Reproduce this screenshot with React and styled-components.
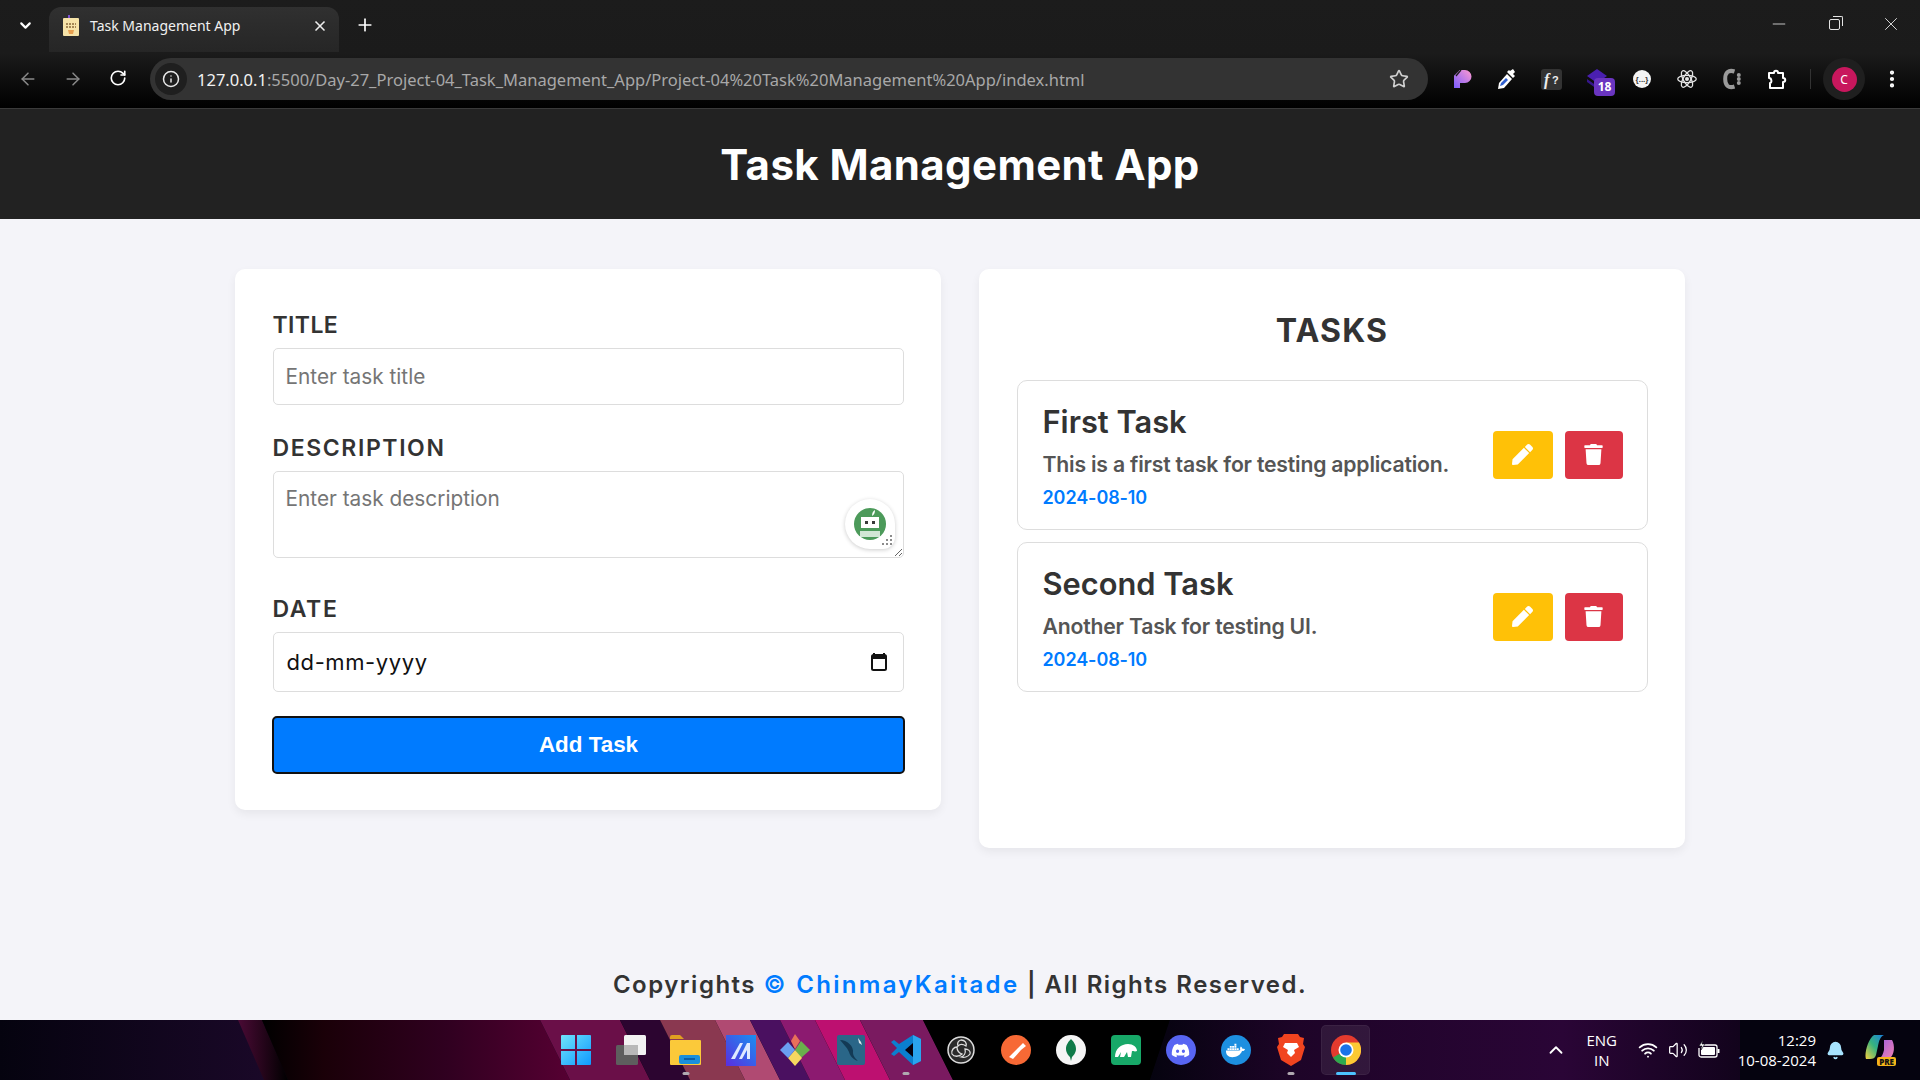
import React from 'react';
import styled, { createGlobalStyle } from 'styled-components';
import { ArrowLeft, ArrowRight, RotateCw, Info, Star, X, Plus, ChevronDown, ChevronUp, Minus, EllipsisVertical, Wifi, Volume2, Bell } from 'lucide-react';
import { FaPen, FaTrash, FaDiscord, FaDocker } from 'react-icons/fa';

const GlobalStyle = createGlobalStyle`
  * { box-sizing: border-box; }
  html, body { margin: 0; padding: 0; }
  body {
    background: #f4f4f9;
    font-family: Inter, "Noto Sans", sans-serif;
    overflow: hidden;
  }
`;

const Page = styled.div`
  display: flex;
  flex-direction: column;
  width: 1920px;
  height: 1080px;
  overflow: hidden;
`;

/* browser chrome */
const Browser = styled.div`
  height: 109px;
  flex: none;
  display: flex;
  flex-direction: column;
  background: linear-gradient(#1c1c1c 0, #1b1b1b 50%, #000 100%);
  border-bottom: 1px solid #3a3a3a;
  font-family: "Noto Sans", "Open Sans", sans-serif;
`;

const TabStrip = styled.div`
  height: 52px;
  display: flex;
  align-items: flex-end;
  padding-left: 11px;
  color: #e6e6e6;
`;

const StripButton = styled.div`
  width: 28px;
  height: 38px;
  margin-bottom: 8px;
  display: flex;
  align-items: center;
  justify-content: center;
  color: #fff;
`;

const Tab = styled.div`
  width: 290px;
  height: 45px;
  margin: 0 12px 0 10px;
  padding: 0 11px 8px 12px;
  display: flex;
  align-items: center;
  gap: 9px;
  border-radius: 12px 12px 0 0;
  background: linear-gradient(#303030, #262626);
`;

const TabTitle = styled.span`
  flex: 1;
  font-size: 14px;
  color: #f0f0f0;
`;

const WindowControls = styled.div`
  margin-left: auto;
  height: 48px;
  align-self: flex-start;
  display: flex;
  align-items: center;
  gap: 40px;
  padding-right: 18px;
  color: #e4e4e4;
`;

const RestoreIcon = styled.div`
  position: relative;
  width: 11px;
  height: 11px;
  border: 1px solid #e4e4e4;
  border-radius: 2px;
  &::after {
    content: '';
    position: absolute;
    top: -4px;
    right: -4px;
    width: 9px;
    height: 9px;
    border-top: 1px solid #e4e4e4;
    border-right: 1px solid #e4e4e4;
    border-radius: 0 2px 0 0;
  }
`;

const Toolbar = styled.div`
  height: 56px;
  display: flex;
  align-items: center;
  padding-bottom: 2px;
`;

const NavButton = styled.div`
  width: 45px;
  display: flex;
  justify-content: center;
  color: ${p => (p.$dim ? '#8a8a8a' : '#fff')};
`;

const NavGroup = styled.div`
  display: flex;
  padding-left: 5px;
  width: 150px;
`;

const AddressBar = styled.div`
  width: 1278px;
  height: 42px;
  border-radius: 21px;
  background: #333;
  display: flex;
  align-items: center;
  padding: 0 19px 0 5px;
`;

const InfoBadge = styled.div`
  width: 32px;
  height: 32px;
  border-radius: 50%;
  background: #1f1f1f;
  display: flex;
  align-items: center;
  justify-content: center;
  color: #e8e8e8;
  margin-right: 10px;
`;

const UrlText = styled.div`
  flex: 1;
  font-size: 16.5px;
  color: #a8a8a8;
  white-space: nowrap;
  & b { font-weight: 400; color: #f2f2f2; }
`;

const Extensions = styled.div`
  display: flex;
  align-items: center;
  padding-left: 11px;
`;

const ExtSlot = styled.div`
  position: relative;
  width: 45px;
  height: 32px;
  display: flex;
  align-items: center;
  justify-content: center;
  color: #fff;
`;

const CountBadge = styled.span`
  position: absolute;
  right: 4px;
  bottom: -1px;
  width: 21px;
  height: 18px;
  border-radius: 4px;
  background: #6a35c0;
  color: #fff;
  font-size: 12px;
  font-weight: 700;
  line-height: 18px;
  text-align: center;
`;

const Separator = styled.div`
  width: 1px;
  height: 20px;
  background: #333;
  margin: 0 12px 0 11px;
`;

const AvatarRing = styled.div`
  width: 42px;
  height: 42px;
  border-radius: 50%;
  background: #1f1f1f;
  display: flex;
  align-items: center;
  justify-content: center;
  margin-right: 16px;
`;

const Avatar = styled.div`
  width: 25px;
  height: 25px;
  border-radius: 50%;
  background: #c8175d;
  color: #fff;
  font-size: 12px;
  display: flex;
  align-items: center;
  justify-content: center;
`;

/* app */
const AppHeader = styled.header`
  height: 110px;
  flex: none;
  background: #222;
  display: flex;
  align-items: center;
  justify-content: center;
`;

const AppTitle = styled.h1`
  margin: 0;
  color: #fff;
  font-size: 42px;
  font-weight: 700;
  letter-spacing: 0.4px;
`;

const Main = styled.main`
  flex: 1;
  display: flex;
  justify-content: center;
  align-items: flex-start;
  gap: 38px;
  padding-top: 50px;
`;

const Card = styled.section`
  width: 706px;
  min-height: ${p => p.$minHeight || 0}px;
  padding: ${p => p.$top}px 37.5px 36px;
  background: #fff;
  border-radius: 10px;
  box-shadow: 0 4px 10px rgba(0, 0, 0, 0.06);
`;

const Label = styled.label`
  display: block;
  height: 29px;
  line-height: 29px;
  margin-bottom: 8px;
  color: #333;
  font-size: 23px;
  font-weight: 600;
  letter-spacing: ${p => (p.$tight ? 0.4 : 1.6)}px;
`;

const TextInput = styled.input`
  display: block;
  width: 100%;
  height: 57px;
  padding: 0 12px;
  margin-bottom: 29px;
  border: 1.5px solid #ddd;
  border-radius: 5px;
  background: #fff;
  font-family: inherit;
  font-size: 20.8px;
  &::placeholder { color: #757575; }
`;

const TextAreaWrap = styled.div`
  position: relative;
  margin-bottom: 37px;
`;

const TextArea = styled.textarea`
  display: block;
  width: 100%;
  height: 87px;
  padding: 14px 12px;
  border: 1.5px solid #ddd;
  border-radius: 5px;
  font-family: inherit;
  font-size: 20.8px;
  &::placeholder { color: #757575; }
`;

const BotBadge = styled.div`
  position: absolute;
  right: 9px;
  bottom: 9px;
  width: 50px;
  height: 50px;
  border-radius: 50% 50% 12px 50%;
  background: #fff;
  box-shadow: 0 1px 4px rgba(0, 0, 0, 0.2);
  display: flex;
  align-items: center;
  justify-content: center;
`;

const GripWrap = styled.span`
  position: absolute;
  right: 2px;
  bottom: 3px;
  display: flex;
`;

const DateField = styled.div`
  height: 60px;
  padding: 0 16px 0 13px;
  margin-bottom: 24px;
  display: flex;
  align-items: center;
  justify-content: space-between;
  border: 1.5px solid #ddd;
  border-radius: 5px;
  color: #111;
  font-size: 22px;
  letter-spacing: 0.6px;
`;

const SubmitButton = styled.button`
  display: block;
  width: 633px;
  height: 58px;
  margin-left: -0.5px;
  border: 2px solid #111;
  border-radius: 5px;
  background: #007bff;
  color: #fff;
  font-family: "Liberation Sans", Arial, sans-serif;
  font-size: 22.4px;
  font-weight: 700;
`;

const TasksHeading = styled.h2`
  margin: 4px 0 29px;
  height: 40px;
  line-height: 40px;
  text-align: center;
  color: #333;
  font-size: 32px;
  font-weight: 700;
  letter-spacing: 1.2px;
`;

const TaskList = styled.div`
  display: flex;
  flex-direction: column;
  gap: 12px;
`;

const TaskCard = styled.article`
  height: 150px;
  padding: 0 24px 0 25px;
  display: flex;
  align-items: center;
  justify-content: space-between;
  border: 1.5px solid #ddd;
  border-radius: 10px;
`;

const TaskInfo = styled.div`
  padding-top: 1px;
`;

const TaskName = styled.h3`
  margin: 0 0 7px;
  line-height: 40px;
  color: #333;
  font-size: 30.8px;
  font-weight: 600;
`;

const TaskDesc = styled.p`
  margin: 0 0 7px;
  line-height: 30px;
  color: #555;
  font-size: 21.2px;
  font-weight: 600;
  letter-spacing: -0.2px;
`;

const TaskDate = styled.div`
  line-height: 24px;
  color: #007bff;
  font-size: 18px;
  font-weight: 600;
  letter-spacing: -0.1px;
`;

const TaskActions = styled.div`
  display: flex;
  gap: 12px;
  margin-top: -1px;
`;

const IconButton = styled.button`
  width: ${p => p.$width}px;
  height: 48px;
  border: none;
  border-radius: 4px;
  background: ${p => p.$color};
  color: #fff;
  display: flex;
  align-items: center;
  justify-content: center;
  font-size: 21px;
`;

const Footer = styled.footer`
  flex: none;
  height: 70px;
  padding-top: 17px;
  text-align: center;
  line-height: 36px;
  color: #333;
  font-size: 24px;
  font-weight: 600;
  letter-spacing: 1.5px;
  & span { color: #007bff; letter-spacing: 2.3px; }
`;

/* taskbar */
const Taskbar = styled.div`
  position: relative;
  flex: none;
  height: 60px;
  display: grid;
  grid-template-columns: 1fr auto 1fr;
  align-items: center;
  background: #05030f;
  color: #fff;
  font-family: "Open Sans", "Noto Sans", sans-serif;
`;

const Wallpaper = styled.svg`
  position: absolute;
  inset: 0;
`;

const TaskIcons = styled.div`
  position: relative;
  grid-column: 2;
  display: flex;
  padding-left: 1px;
`;

const TaskIcon = styled.div`
  position: relative;
  width: 55px;
  height: 60px;
  display: flex;
  align-items: center;
  justify-content: center;
  & > svg, & > div { position: relative; }
  &::before {
    content: '';
    display: ${p => (p.$active ? 'block' : 'none')};
    position: absolute;
    inset: 5px 3px;
    border-radius: 5px;
    border: 1px solid rgba(255, 255, 255, 0.05);
    background: rgba(255, 255, 255, 0.08);
  }
  &::after {
    content: '';
    display: ${p => (p.$dot || p.$active ? 'block' : 'none')};
    position: absolute;
    bottom: 5px;
    left: 50%;
    transform: translateX(-50%);
    width: ${p => (p.$active ? 20 : 7)}px;
    height: 3px;
    border-radius: 2px;
    background: ${p => (p.$active ? '#4cc2ff' : '#b0a8b0')};
  }
`;

const Tray = styled.div`
  position: relative;
  grid-column: 3;
  display: flex;
  align-items: center;
  justify-content: flex-end;
  padding-right: 25px;
  font-size: 15px;
`;

const LangBlock = styled.div`
  width: 40px;
  margin: 0 16px 0 15px;
  text-align: center;
  line-height: 20px;
`;

const TrayIcons = styled.div`
  display: flex;
  align-items: center;
  gap: 10px;
  margin-right: 18px;
`;

const ClockBlock = styled.div`
  text-align: right;
  line-height: 20px;
  margin-right: 10px;
`;

const CopilotWrap = styled.div`
  position: relative;
  width: 30px;
  height: 30px;
  margin-left: 20px;
`;

const PreTag = styled.span`
  position: absolute;
  right: -1px;
  bottom: -1px;
  height: 9px;
  padding: 0 2px;
  border-radius: 2px;
  background: #f4b41a;
  color: #111;
  font-size: 8px;
  font-weight: 800;
  line-height: 9px;
`;

const Favicon = () => (
  <svg width="20" height="24" viewBox="0 0 20 24">
    <path d="M8 1v5" stroke="#7a4fd0" strokeWidth="2" />
    <rect x="2" y="4" width="16" height="18" rx="1" fill="#f6e3a8" />
    <path d="M5 10h10M5 13h10" stroke="#8a6a3a" strokeWidth="1.6" strokeDasharray="2 1" />
    <path d="M7 16h6l-1 4H8z" fill="#e8a050" />
  </svg>
);

const PluginP = () => (
  <svg width="20" height="20" viewBox="0 0 20 20">
    <defs>
      <linearGradient id="pp" x1="0" y1="1" x2="1" y2="0">
        <stop offset="0" stopColor="#7a5cff" />
        <stop offset="1" stopColor="#ff9ad0" />
      </linearGradient>
    </defs>
    <path d="M2 6 7 1h6a6 6 0 0 1 0 13H8v5H2z" fill="url(#pp)" />
    <path d="M2 6 7 1M4 7l5-6" stroke="#1a1a1a" strokeWidth="1.2" />
  </svg>
);

const Dropper = () => (
  <svg width="21" height="22" viewBox="0 0 21 22">
    <path d="M11 6 3 15l-1 6 6-1 8-9z" fill="#fff" />
    <path d="M5 15l5-5 2 2-5 5-3 1z" fill="#2f5fd0" />
    <path d="M11 4l6 6 2-2-2-2 2-2-2-3-3 2-1-1z" fill="#fff" />
  </svg>
);

const FontWhat = () => (
  <svg width="21" height="21" viewBox="0 0 21 21">
    <rect width="21" height="21" rx="3" fill="#333" />
    <text x="3" y="16" fontFamily="Liberation Serif" fontStyle="italic" fontWeight="700" fontSize="16" fill="#eee">f</text>
    <text x="11" y="15" fontFamily="Liberation Sans" fontWeight="700" fontSize="11" fill="#eee">?</text>
  </svg>
);

const Stack = () => (
  <svg width="22" height="20" viewBox="0 0 22 20">
    <path d="M11 0 21 7l-10 7L1 7z" fill="#4a1fb0" />
    <path d="M1 10l10 7 10-7v3l-10 7-10-7z" fill="#35168a" />
  </svg>
);

const JsonDots = () => (
  <svg width="18" height="18" viewBox="0 0 18 18">
    <circle cx="9" cy="9" r="9" fill="#f4f4f4" />
    <text x="9" y="12" textAnchor="middle" fontFamily="Liberation Sans" fontWeight="700" fontSize="8" fill="#333">{'{...}'}</text>
  </svg>
);

const ReactAtom = () => (
  <svg width="20" height="20" viewBox="0 0 20 20" fill="none" stroke="#e4e4e4" strokeWidth="1.3">
    <ellipse cx="10" cy="10" rx="9.300" ry="3.700" />
    <ellipse cx="10" cy="10" rx="9.300" ry="3.700" transform="rotate(60 10 10)" />
    <ellipse cx="10" cy="10" rx="9.300" ry="3.700" transform="rotate(120 10 10)" />
    <circle cx="10" cy="10" r="2" fill="#e4e4e4" stroke="none" />
  </svg>
);

const CssDots = () => (
  <svg width="20" height="22" viewBox="0 0 20 22">
    <path d="M12.500 3.500C6.500 1.500 3.200 4.500 3.200 11s3.300 9.500 9.300 7.500" fill="none" stroke="#9a9a9a" strokeWidth="4" />
    <circle cx="16.800" cy="7" r="2" fill="#9a9a9a" />
    <circle cx="16.800" cy="11" r="2" fill="#9a9a9a" />
    <circle cx="16.800" cy="15" r="2" fill="#9a9a9a" />
  </svg>
);

const PuzzleIcon = () => (
  <svg width="22" height="22" viewBox="0 0 22 22" fill="none" stroke="#fff" strokeWidth="2" strokeLinejoin="round">
    <path d="M3 5h5c0-3 4-3 4 0h5v5c3 0 3 4 0 4v6H4v-5c2 0 2-5-1-5z" />
  </svg>
);

const CalendarIcon = () => (
  <svg width="16" height="20" viewBox="0 0 16 20">
    <path d="M3 1v3M13 1v3" stroke="#111" strokeWidth="2" />
    <rect x="1" y="3" width="14" height="15" rx="1.500" fill="none" stroke="#111" strokeWidth="2" />
    <rect x="1" y="3" width="14" height="4" fill="#111" />
  </svg>
);

const BotIcon = () => (
  <svg width="32" height="32" viewBox="0 0 32 32">
    <circle cx="16" cy="16" r="16" fill="#4c9a5a" />
    <path d="M18 8c0-3 1-5 3-6 0 3-1 5-3 6z" fill="#fff" />
    <rect x="7" y="9" width="18" height="11" fill="#fff" />
    <rect x="11" y="13" width="3" height="3" fill="#3a3a3a" />
    <rect x="18" y="13" width="3" height="3" fill="#3a3a3a" />
    <rect x="6" y="23" width="20" height="6" fill="#fff" opacity="0.75" />
  </svg>
);

const GripIcon = () => (
  <svg width="12" height="12" viewBox="0 0 12 12" fill="#666">
    <circle cx="10" cy="2" r="1" />
    <circle cx="6" cy="6" r="1" />
    <circle cx="10" cy="6" r="1" />
    <circle cx="2" cy="10" r="1" />
    <circle cx="6" cy="10" r="1" />
    <circle cx="10" cy="10" r="1" />
  </svg>
);

const WinLogo = () => (
  <svg width="30" height="30" viewBox="0 0 30 30">
    <defs>
      <linearGradient id="wl" x1="0" y1="0" x2="1" y2="1">
        <stop offset="0" stopColor="#6fe3fb" />
        <stop offset="1" stopColor="#0f9aff" />
      </linearGradient>
    </defs>
    <path d="M0 1a1 1 0 0 1 1-1h13v14H0zM16 0h13a1 1 0 0 1 1 1v13H16zM0 16h14v14H1a1 1 0 0 1-1-1zM16 16h14v13a1 1 0 0 1-1 1H16z" fill="url(#wl)" />
  </svg>
);

const TaskViewIcon = () => (
  <svg width="30" height="30" viewBox="0 0 30 30">
    <rect x="0" y="10" width="22" height="20" rx="1.500" fill="#5e5e5e" />
    <rect x="8" y="0" width="22" height="20" rx="1.500" fill="#f2f2f2" />
    <rect x="8" y="10" width="14" height="10" fill="#b8b8b8" />
  </svg>
);

const FolderIcon = () => (
  <svg width="31" height="30" viewBox="0 0 31 30">
    <path d="M0 2a2 2 0 0 1 2-2h8l4 4H0z" fill="#e0a020" />
    <rect x="0" y="5" width="31" height="25" rx="1" fill="#fbc93a" />
    <rect x="9" y="20" width="21" height="9" rx="2" fill="#1a8fdc" />
    <rect x="14" y="23" width="11" height="2" fill="#0b5fa8" />
  </svg>
);

const MarkerIcon = () => (
  <svg width="30" height="31" viewBox="0 0 30 31">
    <defs>
      <linearGradient id="mk" x1="0" y1="1" x2="1" y2="0">
        <stop offset="0" stopColor="#5a2de0" />
        <stop offset="1" stopColor="#1a90f0" />
      </linearGradient>
    </defs>
    <rect width="30" height="31" fill="url(#mk)" />
    <path d="M5 24 14 8h3L9 24zM13 24l8-16h3v16h-3v-9l-5 9z" fill="#dfe9ff" />
  </svg>
);

const DiamondIcon = () => (
  <svg width="31" height="32" viewBox="0 0 31 32">
    <path d="M15 0l5 7-5 8-4-8z" fill="#e8705a" />
    <path d="M15 16l6-9 9 9-9 8z" fill="#6ab04c" />
    <path d="M15 16l7 8-7 8-7-8z" fill="#f6d860" />
    <path d="M15 16l-7 8-8-8 8-8z" fill="#6a9ff0" />
  </svg>
);

const WorkbenchIcon = () => (
  <svg width="28" height="30" viewBox="0 0 28 30">
    <rect width="28" height="30" rx="2" fill="#2a6688" />
    <path d="M3 5c7 0 14 6 13 13 0 3 3 6 5 8-6-2-8-6-9-9C10 12 6 9 3 5z" fill="#133a55" />
    <path d="M21 3l3 4 1 3-3-2z" fill="#d8e4ec" />
  </svg>
);

const VsCodeIcon = () => (
  <svg width="30" height="30" viewBox="0 0 30 30">
    <path d="M22 0l8 4v22l-8 4L8 17l-5 4-3-2 6-6-6-6 3-2 5 4z" fill="#0a7fcf" />
    <path d="M22 0l8 4v22l-8 4z" fill="#2aa5ef" />
    <path d="M22 8l-8 7 8 7z" fill="#050310" />
  </svg>
);

const ObsIcon = () => (
  <svg width="28" height="28" viewBox="0 0 28 28">
    <circle cx="14" cy="14" r="13" fill="#2a2a2a" stroke="#ddd" strokeWidth="1.500" />
    <path d="M14 4c4 0 6 3 5 6-3-2-6-2-8 0-1-3 0-5 3-6zM5 18c-1-4 2-7 5-7 0 3 2 6 5 7-3 3-8 3-10 0zM23 18c-2 3-6 4-9 3 3-1 5-4 4-8 3 0 6 2 5 5z" fill="none" stroke="#ddd" strokeWidth="1.300" />
  </svg>
);

const PostmanIcon = () => (
  <svg width="30" height="30" viewBox="0 0 30 30">
    <circle cx="15" cy="15" r="15" fill="#f76935" />
    <path d="M8 22l9-9 3 2-8 9zM17 13l5-5 3 3-5 4z" fill="#fff" />
  </svg>
);

const MongoIcon = () => (
  <svg width="30" height="30" viewBox="0 0 30 30">
    <circle cx="15" cy="15" r="15" fill="#f5f5f5" />
    <path d="M15 4c4 4 5 7 5 10 0 4-3 7-4 8l-1 4-1-4c-1-1-4-4-4-8 0-3 1-6 5-10z" fill="#0f7a48" />
  </svg>
);

const DbeaverIcon = () => (
  <svg width="30" height="30" viewBox="0 0 30 30">
    <rect width="30" height="30" rx="4" fill="#17a868" />
    <path d="M4 22c0-8 6-13 13-13 5 0 9 3 9 7-2 1-4 0-5 0l-1 6h-3l-1-5-3 5H9l1-5-3 5z" fill="#fff" />
  </svg>
);

const RoundGlyph = styled.div`
  width: 30px;
  height: 30px;
  border-radius: 50%;
  background: ${p => p.$color};
  color: #fff;
  display: flex;
  align-items: center;
  justify-content: center;
  font-size: 19px;
`;

const BraveIcon = () => (
  <svg width="28" height="32" viewBox="0 0 28 32">
    <path d="M7 0h14l2 3 4 1-1 6 2 3-4 13-10 6-10-6L0 13l2-3-1-6 4-1z" fill="#f1441f" />
    <path d="M8 9h12l2 4-5 3 1 3-4 4-4-4 1-3-5-3z" fill="#fff" />
  </svg>
);

const ChromeIcon = () => (
  <svg width="30" height="30" viewBox="0 0 30 30">
    <circle cx="15" cy="15" r="15" fill="#e33b2e" />
    <path d="M15 15 2 22.500A15 15 0 0 0 15 30c0 0 5-6 0-15z" fill="#2da94f" />
    <path d="M15 30A15 15 0 0 0 28 7.500H15z" fill="#fcc934" />
    <path d="M2 7.500 9 20l6-5z" fill="#e33b2e" />
    <circle cx="15" cy="15" r="7.500" fill="#fff" />
    <circle cx="15" cy="15" r="5.800" fill="#1a73e8" />
  </svg>
);

const BatteryIcon = () => (
  <svg width="22" height="20" viewBox="0 0 22 20" fill="none" stroke="#fff" strokeWidth="1.300">
    <path d="M6 5h11a2 2 0 0 1 2 2v8a2 2 0 0 1-2 2H3a2 2 0 0 1-2-2V8" />
    <rect x="3" y="7" width="14" height="8" fill="#fff" stroke="none" rx="1" />
    <path d="M20.500 9v4" strokeWidth="2" />
    <path d="M5 0 1 6h3L3 10l4-6H4z" fill="#fff" stroke="#05030f" strokeWidth="0.600" />
  </svg>
);

const CopilotIcon = () => (
  <svg width="30" height="28" viewBox="0 0 30 28">
    <defs>
      <linearGradient id="cpa" x1="0" y1="1" x2="1" y2="0">
        <stop offset="0" stopColor="#f4d03f" />
        <stop offset="0.5" stopColor="#36b37e" />
        <stop offset="1" stopColor="#1a7fe0" />
      </linearGradient>
      <linearGradient id="cpb" x1="0" y1="0" x2="1" y2="1">
        <stop offset="0" stopColor="#a060e0" />
        <stop offset="1" stopColor="#f080b0" />
      </linearGradient>
    </defs>
    <path d="M9 0h10c-4 2-5 6-6 11l-2 9c-1 3-3 4-6 4H1C-1 19 3 4 9 0z" fill="url(#cpa)" />
    <path d="M19 5h8c3 5 3 15-3 19H14c3-2 4-5 5-9z" fill="url(#cpb)" />
  </svg>
);

const TopBar = () => (
  <Browser>
    <TabStrip>
      <StripButton><ChevronDown size={17} strokeWidth={3} /></StripButton>
      <Tab>
        <Favicon />
        <TabTitle>Task Management App</TabTitle>
        <X size={16} strokeWidth={2.5} color="#eee" />
      </Tab>
      <StripButton><Plus size={20} strokeWidth={2} /></StripButton>
      <WindowControls>
        <Minus size={20} strokeWidth={1} />
        <RestoreIcon />
        <X size={22} strokeWidth={1} />
      </WindowControls>
    </TabStrip>
    <Toolbar>
      <NavGroup>
        <NavButton $dim><ArrowLeft size={20} strokeWidth={1.8} /></NavButton>
        <NavButton $dim><ArrowRight size={20} strokeWidth={1.8} /></NavButton>
        <NavButton><RotateCw size={18} strokeWidth={2.2} /></NavButton>
      </NavGroup>
      <AddressBar>
        <InfoBadge><Info size={18} strokeWidth={2} /></InfoBadge>
        <UrlText><b>127.0.0.1</b>:5500/Day-27_Project-04_Task_Management_App/Project-04%20Task%20Management%20App/index.html</UrlText>
        <Star size={20} strokeWidth={2} color="#d0d0d0" />
      </AddressBar>
      <Extensions>
        <ExtSlot><PluginP /></ExtSlot>
        <ExtSlot><Dropper /></ExtSlot>
        <ExtSlot><FontWhat /></ExtSlot>
        <ExtSlot><Stack /><CountBadge>18</CountBadge></ExtSlot>
        <ExtSlot><JsonDots /></ExtSlot>
        <ExtSlot><ReactAtom /></ExtSlot>
        <ExtSlot><CssDots /></ExtSlot>
        <ExtSlot><PuzzleIcon /></ExtSlot>
        <Separator />
        <AvatarRing><Avatar>C</Avatar></AvatarRing>
        <EllipsisVertical size={22} strokeWidth={2.6} color="#fff" />
      </Extensions>
    </Toolbar>
  </Browser>
);

const TaskRow = ({ name, desc, date }) => (
  <TaskCard>
    <TaskInfo>
      <TaskName>{name}</TaskName>
      <TaskDesc>{desc}</TaskDesc>
      <TaskDate>{date}</TaskDate>
    </TaskInfo>
    <TaskActions>
      <IconButton $width={60} $color="#ffc107"><FaPen /></IconButton>
      <IconButton $width={58} $color="#dc3545"><FaTrash /></IconButton>
    </TaskActions>
  </TaskCard>
);

const BottomBar = () => (
  <Taskbar>
    <Wallpaper width="1920" height="60" viewBox="0 0 1920 60">
      <defs>
        <linearGradient id="wp0" x1="0" x2="1" y1="0" y2="0">
          <stop offset="0" stopColor="#05030f" />
          <stop offset="1" stopColor="#1a0828" />
        </linearGradient>
        <linearGradient id="wp1" x1="0" x2="1" y1="0" y2="0">
          <stop offset="0" stopColor="#000" />
          <stop offset="0.2" stopColor="#1a0008" />
          <stop offset="0.6" stopColor="#300020" />
          <stop offset="1" stopColor="#560032" />
        </linearGradient>
        <linearGradient id="wp2" x1="0" x2="1" y1="0" y2="0">
          <stop offset="0" stopColor="#05030f" />
          <stop offset="0.25" stopColor="#1e0428" />
          <stop offset="0.7" stopColor="#2a0536" />
          <stop offset="1" stopColor="#12031c" />
        </linearGradient>
        <linearGradient id="wpStreak" x1="0" x2="1" y1="0" y2="0">
          <stop offset="0" stopColor="#4a0a35" />
          <stop offset="1" stopColor="#000" />
        </linearGradient>
      </defs>
      <polygon points="0,0 240,0 266,60 0,60" fill="url(#wp0)" />
      <polygon points="238,0 262,0 288,60 264,60" fill="url(#wpStreak)" />
      <polygon points="262,0 540,0 570,60 288,60" fill="url(#wp1)" />
      <polygon points="540,0 620,0 650,60 570,60" fill="#6a0f48" />
      <polygon points="620,0 660,0 690,60 650,60" fill="#2c0530" />
      <polygon points="660,0 715,0 745,60 690,60" fill="#8a3850" />
      <polygon points="715,0 750,0 780,60 745,60" fill="#b04a72" />
      <polygon points="750,0 780,0 810,60 780,60" fill="#4a1060" />
      <polygon points="780,0 815,0 845,60 810,60" fill="#8c1a70" />
      <polygon points="815,0 860,0 890,60 845,60" fill="#bd1070" />
      <polygon points="860,0 923,0 953,60 890,60" fill="#7a1a60" />
      <polygon points="923,0 1170,0 1150,60 953,60" fill="#000" />
      <polygon points="1170,0 1740,0 1740,60 1150,60" fill="url(#wp2)" />
    </Wallpaper>
    <TaskIcons>
      <TaskIcon><WinLogo /></TaskIcon>
      <TaskIcon><TaskViewIcon /></TaskIcon>
      <TaskIcon $dot><FolderIcon /></TaskIcon>
      <TaskIcon><MarkerIcon /></TaskIcon>
      <TaskIcon><DiamondIcon /></TaskIcon>
      <TaskIcon><WorkbenchIcon /></TaskIcon>
      <TaskIcon $dot><VsCodeIcon /></TaskIcon>
      <TaskIcon><ObsIcon /></TaskIcon>
      <TaskIcon><PostmanIcon /></TaskIcon>
      <TaskIcon><MongoIcon /></TaskIcon>
      <TaskIcon><DbeaverIcon /></TaskIcon>
      <TaskIcon><RoundGlyph $color="#5865f2"><FaDiscord /></RoundGlyph></TaskIcon>
      <TaskIcon><RoundGlyph $color="#1d8fe0"><FaDocker /></RoundGlyph></TaskIcon>
      <TaskIcon $dot><BraveIcon /></TaskIcon>
      <TaskIcon $active><ChromeIcon /></TaskIcon>
    </TaskIcons>
    <Tray>
      <ChevronUp size={22} strokeWidth={2} />
      <LangBlock>ENG<br />IN</LangBlock>
      <TrayIcons>
        <Wifi size={20} strokeWidth={2.2} />
        <Volume2 size={20} strokeWidth={1.5} />
        <BatteryIcon />
      </TrayIcons>
      <ClockBlock>12:29<br />10-08-2024</ClockBlock>
      <Bell size={19} fill="#a8e4ff" color="#a8e4ff" />
      <CopilotWrap><CopilotIcon /><PreTag>PRE</PreTag></CopilotWrap>
    </Tray>
  </Taskbar>
);

const App = () => (
  <Page>
    <GlobalStyle />
    <TopBar />
    <AppHeader><AppTitle>Task Management App</AppTitle></AppHeader>
    <Main>
      <Card $top={42}>
        <Label $tight>TITLE</Label>
        <TextInput placeholder="Enter task title" />
        <Label>DESCRIPTION</Label>
        <TextAreaWrap>
          <TextArea placeholder="Enter task description" />
          <BotBadge><BotIcon /><GripWrap><GripIcon /></GripWrap></BotBadge>
        </TextAreaWrap>
        <Label>DATE</Label>
        <DateField>dd-mm-yyyy<CalendarIcon /></DateField>
        <SubmitButton>Add Task</SubmitButton>
      </Card>
      <Card $top={38} $minHeight={579}>
        <TasksHeading>TASKS</TasksHeading>
        <TaskList>
          <TaskRow name="First Task" desc="This is a first task for testing application." date="2024-08-10" />
          <TaskRow name="Second Task" desc="Another Task for testing UI." date="2024-08-10" />
        </TaskList>
      </Card>
    </Main>
    <Footer>Copyrights <span>© ChinmayKaitade</span> | All Rights Reserved.</Footer>
    <BottomBar />
  </Page>
);

export default App;
